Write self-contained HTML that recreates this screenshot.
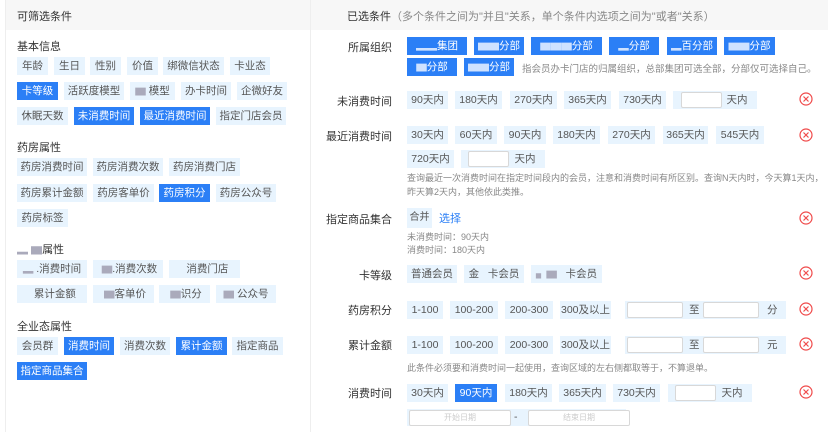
<!DOCTYPE html><html><head><meta charset="utf-8"><style>
*{margin:0;padding:0;box-sizing:border-box}
body{width:828px;height:432px;background:#fff;font-family:"Liberation Sans","Noto Sans CJK SC",sans-serif;font-size:11px;color:#333;position:relative;overflow:hidden}
.a{position:absolute;white-space:nowrap}
.t{position:absolute;height:18px;line-height:18px;background:#e8f4fe;color:#555;text-align:center;font-size:10.5px;white-space:nowrap}
.b{background:#2b7ff6;color:#fff}
.g{color:#aab}
.b .g{color:#cfe2ff}
.lbl{position:absolute;width:90px;text-align:right;font-size:11px;color:#333}
.in{position:absolute;height:16px;background:#fff;border:1px solid #d8d8d8;border-radius:2px}
.note{position:absolute;font-size:9px;color:#888;white-space:nowrap}
.x{position:absolute;width:14px;height:14px}
</style></head><body>
<svg width="0" height="0" style="position:absolute"><defs><symbol id="xi" viewBox="0 0 14 14"><circle cx="7" cy="7" r="6" fill="none" stroke="#f04a4a" stroke-width="1.2"/><path d="M4.5 4.5L9.5 9.5M9.5 4.5L4.5 9.5" stroke="#f04a4a" stroke-width="1.2"/></symbol></defs></svg>
<div class="a" style="left:5px;top:0;width:305px;height:30px;background:#f7f7f7"></div>
<div class="a" style="left:310px;top:0;width:518px;height:30px;background:#f7f7f7"></div>
<div class="a" style="left:5px;top:0;width:1px;height:432px;background:#eee"></div>
<div class="a" style="left:310px;top:0;width:1px;height:432px;background:#eee"></div>
<div class="a" style="left:17px;top:8px;font-size:11px">可筛选条件</div>
<div class="a" style="left:347px;top:8px;font-size:11px">已选条件<span style="color:#888">（多个条件之间为"并且"关系，单个条件内选项之间为"或者"关系）</span></div>

<div class="a" style="left:17px;top:38px">基本信息</div>
<div class="t" style="left:17px;top:57px;width:31px">年龄</div>
<div class="t" style="left:54px;top:57px;width:31px">生日</div>
<div class="t" style="left:90px;top:57px;width:31px">性别</div>
<div class="t" style="left:127px;top:57px;width:31px">价值</div>
<div class="t" style="left:163px;top:57px;width:61px">绑微信状态</div>
<div class="t" style="left:230px;top:57px;width:40px">卡业态</div>
<div class="t b" style="left:17px;top:82px;width:41px">卡等级</div>
<div class="t" style="left:64px;top:82px;width:60px">活跃度模型</div>
<div class="t" style="left:130px;top:82px;width:45px"><span class="g">▆</span> 模型</div>
<div class="t" style="left:181px;top:82px;width:50px">办卡时间</div>
<div class="t" style="left:237px;top:82px;width:50px">企微好友</div>
<div class="t" style="left:17px;top:107px;width:51px">休眠天数</div>
<div class="t b" style="left:74px;top:107px;width:60px">未消费时间</div>
<div class="t b" style="left:140px;top:107px;width:70px">最近消费时间</div>
<div class="t" style="left:216px;top:107px;width:70px">指定门店会员</div>
<div class="a" style="left:17px;top:139px">药房属性</div>
<div class="t" style="left:17px;top:158px;width:70px">药房消费时间</div>
<div class="t" style="left:93px;top:158px;width:70px">药房消费次数</div>
<div class="t" style="left:169px;top:158px;width:71px">药房消费门店</div>
<div class="t" style="left:17px;top:184px;width:70px">药房累计金额</div>
<div class="t" style="left:93px;top:184px;width:61px">药房客单价</div>
<div class="t b" style="left:159px;top:184px;width:51px">药房积分</div>
<div class="t" style="left:216px;top:184px;width:60px">药房公众号</div>
<div class="t" style="left:17px;top:209px;width:51px">药房标签</div>
<div class="a" style="left:17px;top:241px"><span class="g">▂ ▆</span>属性</div>
<div class="t" style="left:17px;top:260px;width:70px"><span class="g">▂ </span>.消费时间</div>
<div class="t" style="left:93px;top:260px;width:70px">&nbsp;<span class="g">▆</span>.消费次数</div>
<div class="t" style="left:169px;top:260px;width:71px">&nbsp;&nbsp;消费门店</div>
<div class="t" style="left:17px;top:285px;width:70px">&nbsp;&nbsp;累计金额</div>
<div class="t" style="left:93px;top:285px;width:61px">&nbsp;<span class="g">▆</span>客单价</div>
<div class="t" style="left:159px;top:285px;width:51px">&nbsp;<span class="g">▆</span>识分</div>
<div class="t" style="left:216px;top:285px;width:60px"><span class="g">▆</span> 公众号</div>
<div class="a" style="left:17px;top:318px">全业态属性</div>
<div class="t" style="left:17px;top:337px;width:41px">会员群</div>
<div class="t b" style="left:64px;top:337px;width:50px">消费时间</div>
<div class="t" style="left:120px;top:337px;width:50px">消费次数</div>
<div class="t b" style="left:176px;top:337px;width:51px">累计金额</div>
<div class="t" style="left:232px;top:337px;width:51px">指定商品</div>
<div class="t b" style="left:17px;top:362px;width:70px">指定商品集合</div>

<div class="lbl" style="left:302px;top:39px">所属组织</div>
<div class="t b" style="left:407px;top:37px;width:60px"><span class="g">▂▂</span>集团</div>
<div class="t b" style="left:474px;top:37px;width:50px"><span class="g">▆▆</span>分部</div>
<div class="t b" style="left:531px;top:37px;width:71px"><span class="g">▆▆▆</span>分部</div>
<div class="t b" style="left:609px;top:37px;width:50px"><span class="g">▂</span>分部</div>
<div class="t b" style="left:667px;top:37px;width:50px"><span class="g">▂</span>百分部</div>
<div class="t b" style="left:724px;top:37px;width:51px"><span class="g">▆▆</span>分部</div>
<div class="t b" style="left:407px;top:58px;width:50px"><span class="g">▆</span>分部</div>
<div class="t b" style="left:464px;top:58px;width:50px"><span class="g">▆▆</span>分部</div>
<div class="note" style="left:522px;top:61px;font-size:9.5px">指会员办卡门店的归属组织，总部集团可选全部，分部仅可选择自己。</div>

<div class="lbl" style="left:302px;top:93px">未消费时间</div>
<div class="t" style="left:407px;top:91px;width:41px">90天内</div>
<div class="t" style="left:455px;top:91px;width:47px">180天内</div>
<div class="t" style="left:510px;top:91px;width:47px">270天内</div>
<div class="t" style="left:564px;top:91px;width:47px">365天内</div>
<div class="t" style="left:619px;top:91px;width:47px">730天内</div>
<div class="t" style="left:673px;top:91px;width:84px"><span style="margin-left:44px">天内</span></div>
<div class="in" style="left:681px;top:92px;width:41px"></div>
<svg class="x" style="left:799px;top:92px"><use href="#xi"/></svg>

<div class="lbl" style="left:302px;top:128px">最近消费时间</div>
<div class="t" style="left:407px;top:126px;width:41px">30天内</div>
<div class="t" style="left:455px;top:126px;width:42px">60天内</div>
<div class="t" style="left:504px;top:126px;width:42px">90天内</div>
<div class="t" style="left:553px;top:126px;width:47px">180天内</div>
<div class="t" style="left:608px;top:126px;width:47px">270天内</div>
<div class="t" style="left:663px;top:126px;width:45px">365天内</div>
<div class="t" style="left:716px;top:126px;width:48px">545天内</div>
<div class="t" style="left:407px;top:150px;width:47px">720天内</div>
<div class="t" style="left:461px;top:150px;width:84px"><span style="margin-left:44px">天内</span></div>
<div class="in" style="left:468px;top:151px;width:41px"></div>
<svg class="x" style="left:799px;top:128px"><use href="#xi"/></svg>
<div class="note" style="left:407px;top:171px">查询最近一次消费时间在指定时间段内的会员，注意和消费时间有所区别。查询N天内时，今天算1天内，</div>
<div class="note" style="left:407px;top:185px">昨天算2天内，其他依此类推。</div>

<div class="lbl" style="left:302px;top:211px">指定商品集合</div>
<div class="t" style="left:407px;top:208px;width:25px;height:20px;line-height:20px;font-size:10px">合并</div>
<div class="a" style="left:439px;top:210px;color:#2b7ff6">选择</div>
<div class="note" style="left:407px;top:230px">未消费时间：90天内</div>
<div class="note" style="left:407px;top:243px">消费时间：180天内</div>
<svg class="x" style="left:799px;top:211px"><use href="#xi"/></svg>

<div class="lbl" style="left:302px;top:267px">卡等级</div>
<div class="t" style="left:407px;top:265px;width:50px">普通会员</div>
<div class="t" style="left:464px;top:265px;width:60px">金&nbsp;&nbsp;&nbsp;卡会员</div>
<div class="t" style="left:531px;top:265px;width:71px"><span class="g">▖▆</span>&nbsp;&nbsp;&nbsp;卡会员</div>
<svg class="x" style="left:799px;top:266px"><use href="#xi"/></svg>

<div class="lbl" style="left:302px;top:302px">药房积分</div>
<div class="t" style="left:407px;top:301px;width:36px">1-100</div>
<div class="t" style="left:450px;top:301px;width:48px">100-200</div>
<div class="t" style="left:505px;top:301px;width:48px">200-300</div>
<div class="t" style="left:560px;top:301px;width:51px">300及以上</div>
<div class="t" style="left:625px;top:301px;width:161px"><span style="position:absolute;left:64px">至</span><span style="position:absolute;left:142px">分</span></div>
<div class="in" style="left:627px;top:302px;width:56px"></div>
<div class="in" style="left:703px;top:302px;width:56px"></div>
<svg class="x" style="left:799px;top:302px"><use href="#xi"/></svg>

<div class="lbl" style="left:302px;top:337px">累计金额</div>
<div class="t" style="left:407px;top:336px;width:36px">1-100</div>
<div class="t" style="left:450px;top:336px;width:48px">100-200</div>
<div class="t" style="left:505px;top:336px;width:48px">200-300</div>
<div class="t" style="left:560px;top:336px;width:51px">300及以上</div>
<div class="t" style="left:625px;top:336px;width:161px"><span style="position:absolute;left:64px">至</span><span style="position:absolute;left:142px">元</span></div>
<div class="in" style="left:627px;top:337px;width:56px"></div>
<div class="in" style="left:703px;top:337px;width:56px"></div>
<svg class="x" style="left:799px;top:337px"><use href="#xi"/></svg>
<div class="note" style="left:407px;top:361px">此条件必须要和消费时间一起使用，查询区域的左右侧都取等于，不算退单。</div>

<div class="lbl" style="left:302px;top:385px">消费时间</div>
<div class="t" style="left:407px;top:384px;width:41px">30天内</div>
<div class="t b" style="left:455px;top:384px;width:42px">90天内</div>
<div class="t" style="left:505px;top:384px;width:47px">180天内</div>
<div class="t" style="left:559px;top:384px;width:47px">365天内</div>
<div class="t" style="left:613px;top:384px;width:47px">730天内</div>
<div class="t" style="left:668px;top:384px;width:84px"><span style="margin-left:44px">天内</span></div>
<div class="in" style="left:675px;top:385px;width:41px"></div>
<svg class="x" style="left:799px;top:385px"><use href="#xi"/></svg>
<div class="t" style="left:407px;top:409px;width:219px;height:17px"><span style="position:absolute;left:107px;top:-1px">-</span></div>
<div class="in" style="left:409px;top:410px;width:102px;font-size:8px;color:#ccc;text-align:center;line-height:14px">开始日期</div>
<div class="in" style="left:528px;top:410px;width:102px;font-size:8px;color:#ccc;text-align:center;line-height:14px">结束日期</div>
</body></html>
